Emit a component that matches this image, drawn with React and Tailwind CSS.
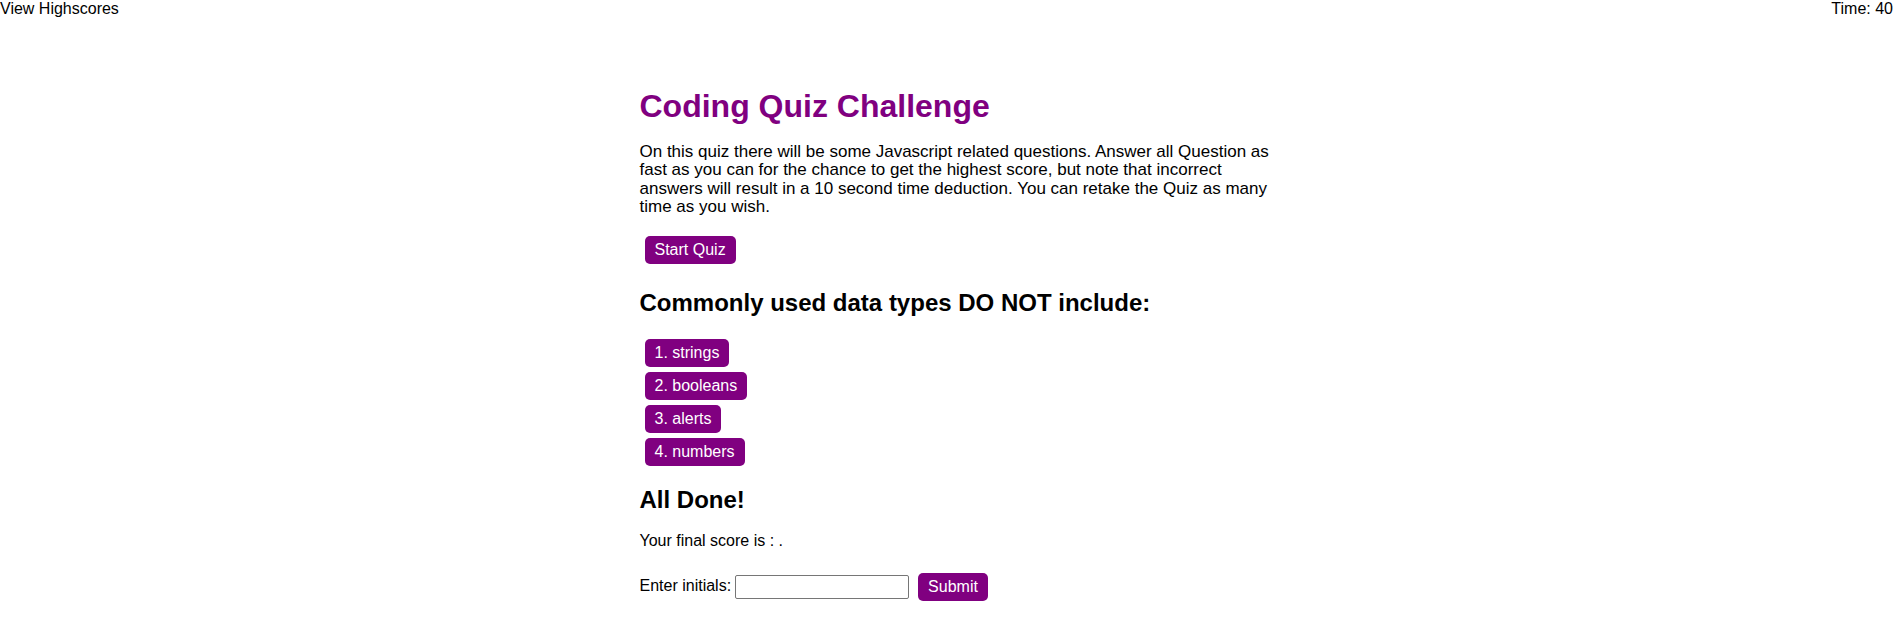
const ANSWERS = ["1. strings", "2. booleans", "3. alerts", "4. numbers"];

const btn =
  "block bg-[#800080] text-white text-[16px] leading-[18px] py-[5px] px-[10px] rounded-[5px] ml-[5px]";

export default function App() {
  return (
    <div className="min-h-[639px] bg-white text-black font-['Liberation_Sans',Arial,sans-serif] text-[16px] leading-[1.15]">
      {/* ── Header ───────────────────────── */}
      <header className="flex justify-between pr-[6px]">
        <a href="#" className="text-black">View Highscores</a>
        <span>Time: 40</span>
      </header>

      {/* ── Quiz body ────────────────────── */}
      <main className="w-[620px] mx-auto">
        <h1 className="mt-[70px] text-[32px] font-bold leading-[1.15] text-[#800080]">
          Coding Quiz Challenge
        </h1>
        <p className="mt-[18px] w-[640px] text-[17px] leading-[18.2px]">
          On this quiz there will be some Javascript related questions. Answer all Question as fast as you can
          for the chance to get the highest score, but note that incorrect answers will result in a 10 second
          time deduction. You can retake the Quiz as many time as you wish.
        </p>
        <button className={`${btn} mt-[20px]`}>Start Quiz</button>

        <h2 className="mt-[25px] text-[24px] font-bold leading-[1.15]">
          Commonly used data types DO NOT include:
        </h2>
        <div className="mt-[22px] flex flex-col items-start gap-[5px]">
          {ANSWERS.map((a) => (
            <button key={a} className={btn}>
              {a}
            </button>
          ))}
        </div>

        <h2 className="mt-[20px] text-[24px] font-bold leading-[1.15]">All Done!</h2>
        <p className="mt-[19px]">Your final score is : .</p>

        <form className="mt-[22px] flex items-center h-[28px]" onSubmit={(e) => e.preventDefault()}>
          <label htmlFor="initials">Enter initials:</label>
          <input
            id="initials"
            type="text"
            className="ml-[4px] w-[174px] h-[24px] border border-[#767676] rounded-[2px] px-[2px] text-[13px] bg-white"
          />
          <button type="submit" className="ml-[9px] bg-[#800080] text-white text-[16px] leading-[18px] py-[5px] px-[10px] rounded-[5px]">
            Submit
          </button>
        </form>
      </main>
    </div>
  );
}
